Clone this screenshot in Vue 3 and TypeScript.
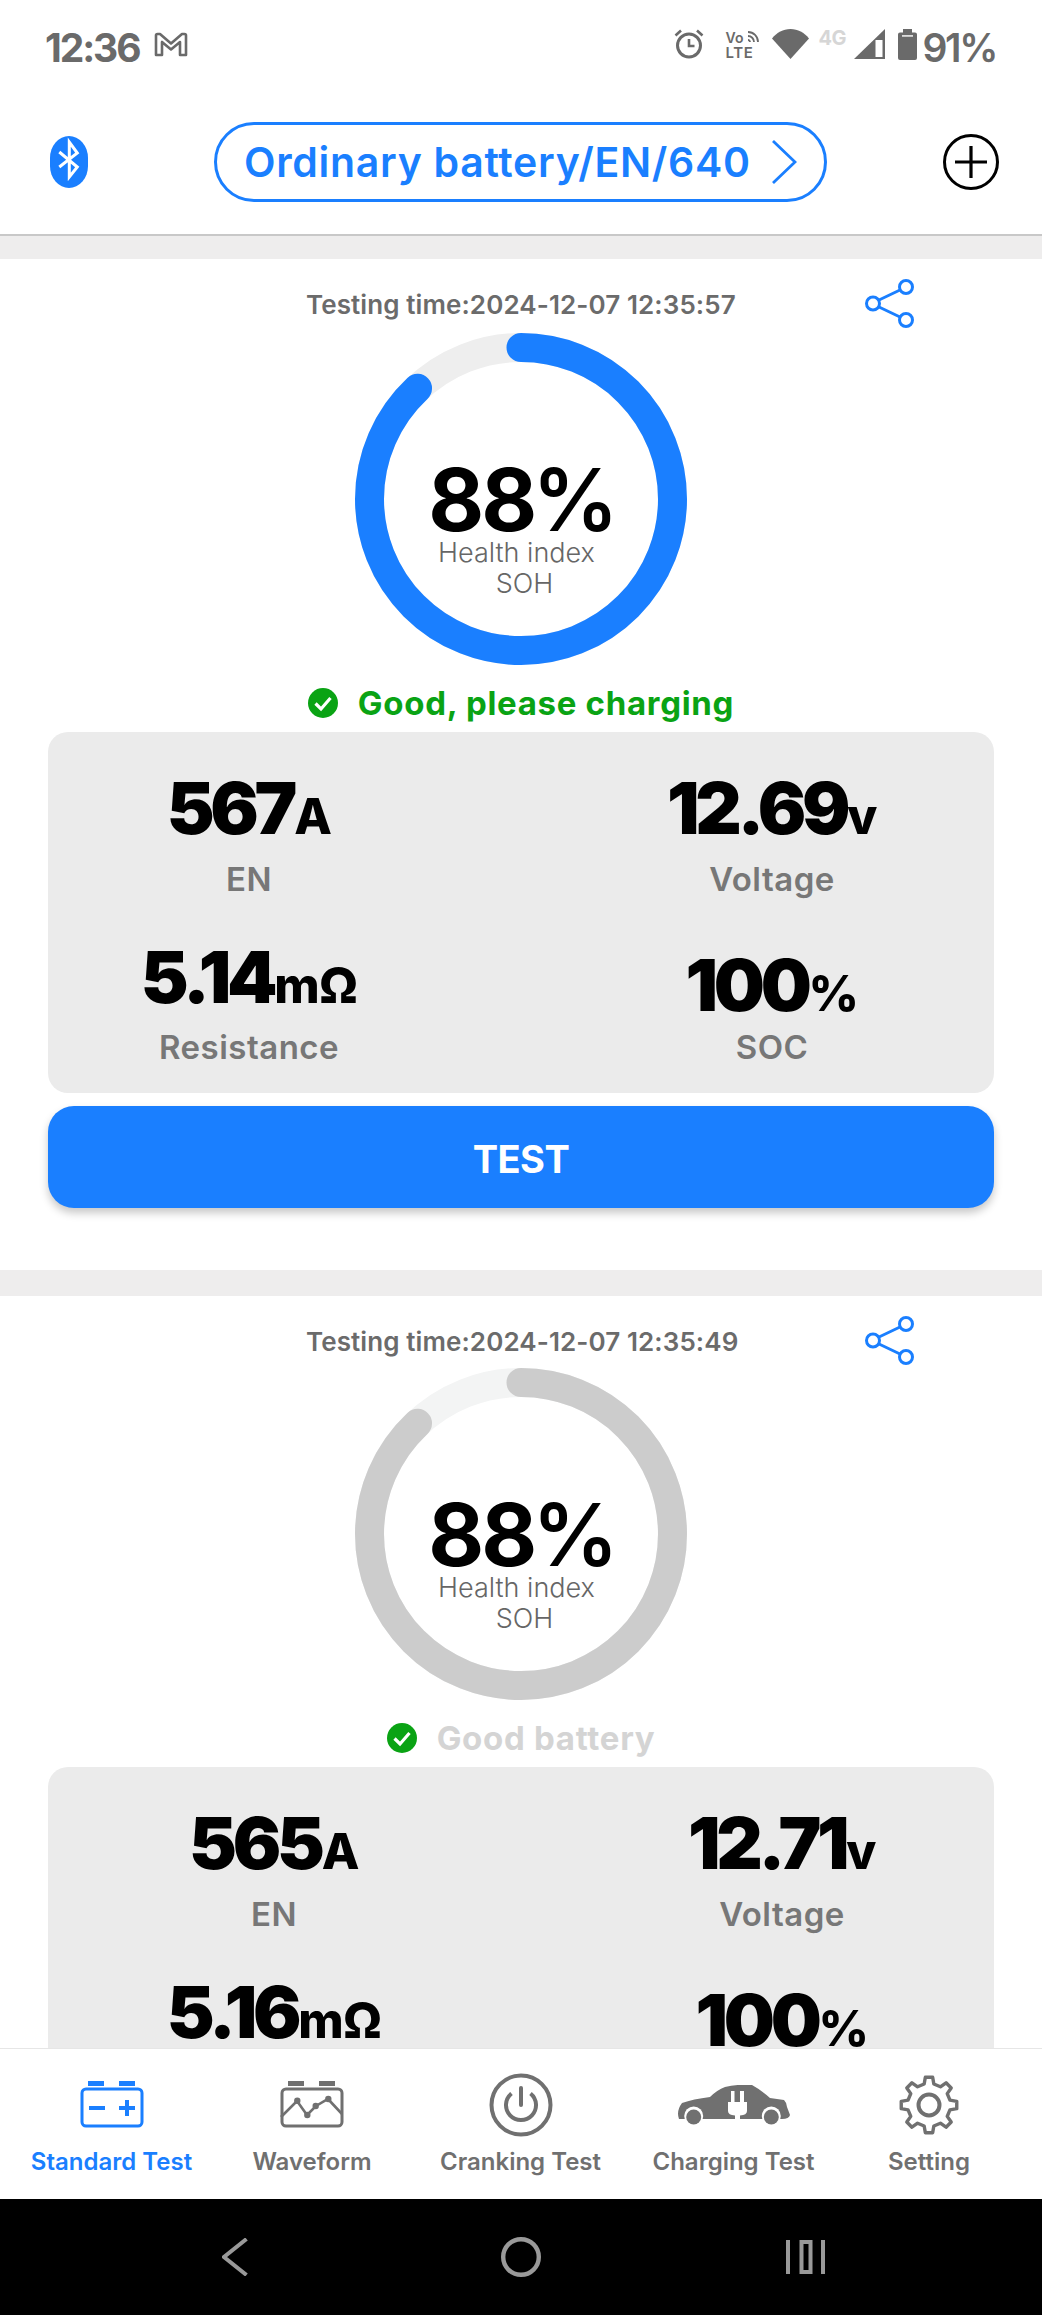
<script setup lang="ts">
interface Metric {
  num: string
  unit: string
  label: string
  cls?: string
}
interface Result {
  id: string
  time: string
  percent: number
  idle: boolean
  verdict: string
  metrics: Metric[]
}

const results: Result[] = [
  {
    id: 'latest',
    time: '2024-12-07 12:35:57',
    percent: 88,
    idle: false,
    verdict: 'Good, please charging',
    metrics: [
      { num: '567', unit: 'A', label: 'EN' },
      { num: '12.69', unit: 'v', label: 'Voltage' },
      { num: '5.14', unit: 'mΩ', label: 'Resistance', cls: 'low' },
      { num: '100', unit: '%', label: 'SOC', cls: 'low soc' },
    ],
  },
  {
    id: 'previous',
    time: '2024-12-07 12:35:49',
    percent: 88,
    idle: true,
    verdict: 'Good battery',
    metrics: [
      { num: '565', unit: 'A', label: 'EN' },
      { num: '12.71', unit: 'v', label: 'Voltage' },
      { num: '5.16', unit: 'mΩ', label: 'Resistance', cls: 'low' },
      { num: '100', unit: '%', label: 'SOC', cls: 'low soc' },
    ],
  },
]

const RING_RADIUS = 151.5
const ringLength = 2 * Math.PI * RING_RADIUS
const arcDash = (percent: number): string =>
  `${(ringLength * percent) / 100} ${ringLength}`

// Outline of the settings cog: eight teeth around the centre of a 60 box
const cogPath = (): string => {
  const pt = (r: number, deg: number): string => {
    const a = (deg * Math.PI) / 180
    return `${(30 + r * Math.sin(a)).toFixed(2)} ${(30 - r * Math.cos(a)).toFixed(2)}`
  }
  const parts: string[] = []
  for (let i = 0; i < 8; i++) {
    const c = i * 45
    parts.push(pt(21.5, c - 13), pt(28, c - 7.5), pt(28, c + 7.5), pt(21.5, c + 13))
  }
  return 'M' + parts.join('L') + 'Z'
}
const cog = cogPath()

const tabs = ['Standard Test', 'Waveform', 'Cranking Test', 'Charging Test', 'Setting']
</script>

<template>
  <div class="phone">
    <div class="status-bar">
      <div class="status-left">
        <span class="clock">12:36</span>
        <svg class="gmail" viewBox="0 0 34 25" width="34" height="25">
          <path d="M2 23V3.5Q2 2 3.5 2H6L17 11.5 28 2h2.500Q32 2 32 3.500V23H26V10L17 17.500 8 10V23Z" fill="none" stroke="#6a6a6a" stroke-width="2.600" stroke-linejoin="round" />
        </svg>
      </div>
      <div class="status-right">
        <svg width="30" height="30" viewBox="0 0 30 30">
          <circle cx="15" cy="16.500" r="11.500" fill="none" stroke="#6a6a6a" stroke-width="3" />
          <path d="M15 10v7h5.500M1.500 6.500 7 1.500M28.500 6.500 23 1.500" fill="none" stroke="#6a6a6a" stroke-width="2.600" />
        </svg>
        <div class="volte">
          <span class="vo">Vo</span>
          <svg width="12" height="14" viewBox="0 0 12 14">
            <path d="M1 5a6 6 0 0 1 6 6M1 1a10 10 0 0 1 10 10M1 9a2 2 0 0 1 2 2" fill="none" stroke="#6a6a6a" stroke-width="1.800" />
          </svg>
          <span class="lte">LTE</span>
        </div>
        <svg class="wifi" width="37" height="30" viewBox="0 0 37 30">
          <path d="M0 9.500C5 3.500 11 0 18.500 0S32 3.500 37 9.500L18.500 30Z" fill="#6a6a6a" />
        </svg>
        <span class="net">4G</span>
        <svg class="signal" width="31" height="30" viewBox="0 0 31 30">
          <path d="M0 30 31 0V30Z" fill="#6a6a6a" />
          <rect x="21.500" y="11" width="7" height="17" fill="#fff" />
        </svg>
        <svg class="cell" width="19" height="31" viewBox="0 0 19 31">
          <path d="M5 0h9v3.500h3q2 0 2 2V29q0 2-2 2H2q-2 0-2-2V5.500q0-2 2-2h3Z" fill="#6a6a6a" />
          <rect x="4" y="6" width="11" height="1.800" fill="#ddd" />
        </svg>
        <span class="level">91%</span>
      </div>
    </div>

    <header class="app-header">
      <svg class="bt" width="38" height="52" viewBox="0 0 38 52">
        <rect width="38" height="52" rx="19" ry="22" fill="#1a7fff" />
        <path d="M9.300 16 27.300 31 19.300 41V6L27.300 17 9.300 31" fill="none" stroke="#fff" stroke-width="3" />
      </svg>
      <button class="battery-pill">
        <span class="pill-text">Ordinary battery/EN/640</span>
        <svg width="26" height="44" viewBox="0 0 26 44">
          <path d="M2 1 24 22 2 43" fill="none" stroke="#1a7fff" stroke-width="2.800" />
        </svg>
      </button>
      <svg width="56" height="56" viewBox="0 0 56 56">
        <circle cx="28" cy="28" r="26.500" fill="none" stroke="#000" stroke-width="3" />
        <path d="M12 28h32M28 12v32" stroke="#000" stroke-width="3.200" />
      </svg>
    </header>

    <main class="history">
      <section v-for="r in results" :key="r.id" class="result" :class="{ idle: r.idle }">
        <div class="band"></div>
        <div class="time-row">
          <span class="time">Testing time:{{ r.time }}</span>
          <svg class="share" width="49" height="49" viewBox="0 0 49 49">
            <path d="M14 21 35 11M14 28 35 38" stroke="#1a7fff" stroke-width="3" />
            <circle cx="8" cy="24.500" r="6.500" fill="#fff" stroke="#1a7fff" stroke-width="3" />
            <circle cx="41" cy="8" r="6.500" fill="#fff" stroke="#1a7fff" stroke-width="3" />
            <circle cx="41" cy="41" r="6.500" fill="#fff" stroke="#1a7fff" stroke-width="3" />
          </svg>
        </div>

        <div class="ring">
          <svg width="332" height="332" viewBox="0 0 332 332">
            <circle class="ring-track" cx="166" cy="166" :r="RING_RADIUS" />
            <circle
              class="ring-arc"
              cx="166"
              cy="166"
              :r="RING_RADIUS"
              :stroke-dasharray="arcDash(r.percent)"
              transform="rotate(-90 166 166)"
            />
          </svg>
          <div class="ring-text">
            <div class="ring-value">{{ r.percent }}<span class="ring-pct">%</span></div>
            <div class="ring-name first">Health index</div>
            <div class="ring-name second">SOH</div>
          </div>
        </div>

        <div class="verdict">
          <svg width="30" height="30" viewBox="0 0 30 30">
            <circle cx="15" cy="15" r="15" fill="#0aa314" />
            <path d="M7.500 15.500 13 21 22.500 10" fill="none" stroke="#fff" stroke-width="3.200" />
          </svg>
          <span>{{ r.verdict }}</span>
        </div>

        <div class="metrics">
          <div v-for="m in r.metrics" :key="m.label" class="metric" :class="m.cls">
            <div class="metric-value">
              <span class="num">{{ m.num }}</span><span class="unit">{{ m.unit }}</span>
            </div>
            <div class="metric-label">{{ m.label }}</div>
          </div>
        </div>

        <button v-if="!r.idle" class="test-btn">TEST</button>
      </section>
    </main>

    <nav class="tabs">
      <div v-for="(t, i) in tabs" :key="t" class="tab" :class="{ active: i === 0 }">
        <div class="tab-icon">
          <svg v-if="i === 0" width="64" height="48" viewBox="0 0 64 48">
            <path d="M8 2.500h16M39 2.500h16" stroke="#1a7fff" stroke-width="5" />
            <rect x="2" y="8" width="60" height="37" rx="4" fill="none" stroke="#1a7fff" stroke-width="3" />
            <path d="M9 27h16M39 27h16M47 19v16" stroke="#1a7fff" stroke-width="4" />
          </svg>
          <svg v-else-if="i === 1" width="64" height="48" viewBox="0 0 64 48">
            <path d="M8 2.500h16M39 2.500h16" stroke="#707070" stroke-width="5" />
            <rect x="2" y="8" width="60" height="37" rx="4" fill="none" stroke="#707070" stroke-width="3" />
            <path d="M1 36 17 20 27 34 36 25 48 18 62 33" fill="none" stroke="#707070" stroke-width="2.600" />
            <g fill="#707070">
              <circle cx="17.300" cy="19.700" r="3.200" />
              <circle cx="27.300" cy="34" r="3.200" />
              <circle cx="35.700" cy="25" r="3.200" />
              <circle cx="48.300" cy="18" r="3.200" />
            </g>
          </svg>
          <svg v-else-if="i === 2" width="64" height="64" viewBox="0 0 64 64">
            <circle cx="32" cy="32" r="29.500" fill="none" stroke="#707070" stroke-width="4" />
            <path d="M22.500 20.500a15 15 0 1 0 19 0" fill="none" stroke="#707070" stroke-width="4" />
            <path d="M32 15v17" stroke="#707070" stroke-width="4" stroke-linecap="round" />
          </svg>
          <svg v-else-if="i === 3" width="114" height="40" viewBox="0 0 114 40">
            <path d="M2 34Q-1 26 5 18 16 14 33 12 40 5 48 2 60-1 75 0 84 5 93 13L107 15Q110 18 110 22L113 30Q112 34 105 34H2Z" fill="#707070" />
            <circle cx="16.700" cy="31" r="9.500" fill="#fff" />
            <circle cx="94.300" cy="31" r="9.500" fill="#fff" />
            <circle cx="16.700" cy="32" r="7.500" fill="#707070" />
            <circle cx="94.300" cy="32" r="7.500" fill="#707070" />
            <path d="M54 6h3.500v11H63V6h4v11h3V26Q70 30 63 30.500V35H58V30.500Q51 30 51 26V17h3Z" fill="#fff" />
          </svg>
          <svg v-else width="60" height="60" viewBox="0 0 60 60">
            <path :d="cog" fill="none" stroke="#707070" stroke-width="3.400" stroke-linejoin="round" />
            <circle cx="30" cy="30" r="10.500" fill="none" stroke="#707070" stroke-width="4" />
          </svg>
        </div>
        <span class="tab-label">{{ t }}</span>
      </div>
    </nav>

    <div class="system-nav">
      <svg width="26" height="38" viewBox="0 0 26 38">
        <path d="M24.500 1 2 19 24.500 37" fill="none" stroke="#999" stroke-width="4" />
      </svg>
      <svg width="40" height="40" viewBox="0 0 40 40">
        <circle cx="20" cy="20" r="17.800" fill="none" stroke="#999" stroke-width="4.400" />
      </svg>
      <svg width="39" height="34" viewBox="0 0 39 34">
        <path d="M2 0v34M37 0v34" stroke="#999" stroke-width="4" />
        <rect x="15.500" y="2" width="9" height="30" fill="none" stroke="#999" stroke-width="4" />
      </svg>
    </div>
  </div>
</template>

<style scoped>
.phone {
  width: 1042px;
  height: 2315px;
  display: flex;
  flex-direction: column;
  background: #fff;
  font-family: Inter, "Noto Sans", sans-serif;
  overflow: hidden;
}

/* System status strip */
.status-bar {
  height: 90px;
  flex: none;
  display: flex;
  justify-content: space-between;
  align-items: flex-start;
  box-sizing: border-box;
  padding: 29px 46px 0 45px;
  color: #6a6a6a;
}
.status-left {
  display: flex;
  align-items: flex-start;
  gap: 15px;
}
.clock {
  font-size: 39px;
  line-height: 38px;
  font-weight: 700;
  letter-spacing: -2.100px;
}
.gmail {
  margin-top: 3px;
}
.status-right {
  display: flex;
  align-items: flex-start;
}
.volte {
  width: 33px;
  margin-left: 22px;
  margin-top: 1px;
  display: flex;
  flex-wrap: wrap;
  align-items: center;
  color: #6a6a6a;
}
.vo {
  font-size: 14px;
  line-height: 15px;
  font-weight: 600;
  width: 21px;
}
.lte {
  font-size: 15px;
  line-height: 15px;
  font-weight: 600;
  width: 33px;
  letter-spacing: 0.600px;
}
.wifi {
  margin-left: 13px;
}
.net {
  margin-left: 10px;
  width: 28px;
  font-size: 20px;
  line-height: 19px;
  font-weight: 700;
  color: #d6d6d6;
  letter-spacing: -0.500px;
}
.signal {
  margin-left: 7px;
}
.cell {
  margin-left: 13px;
}
.level {
  margin-left: 6px;
  font-size: 39px;
  line-height: 38px;
  font-weight: 600;
  letter-spacing: -2.400px;
}

/* App header */
.app-header {
  height: 146px;
  flex: none;
  display: flex;
  justify-content: space-between;
  align-items: center;
  box-sizing: border-box;
  padding: 0 43px 0 50px;
  border-bottom: 2px solid #c8c8c8;
}
.battery-pill {
  width: 613px;
  height: 80px;
  margin-left: 10px;
  display: flex;
  align-items: center;
  justify-content: space-between;
  box-sizing: border-box;
  padding: 0 27px 0 27px;
  background: #fff;
  border: 3px solid #1a7fff;
  border-radius: 40px;
  color: #1a7fff;
  font: 600 41px/1 Inter, "Noto Sans", sans-serif;
  letter-spacing: 0.700px;
}
.pill-text {
  padding-top: 1px;
}

/* Test results list */
.history {
  flex: 1;
  min-height: 0;
  overflow: hidden;
}
.band {
  height: 23px;
  background: #eeeded;
}
.idle .band {
  height: 26px;
}
.result {
  padding-bottom: 62px;
  display: flex;
  flex-direction: column;
}
.time-row {
  display: flex;
  align-items: center;
  justify-content: flex-start;
  margin-top: 20px;
  padding-left: 306px;
  height: 49px;
}
.idle .ring {
  margin-top: 3px;
}
.time {
  width: 429px;
  flex: none;
  padding-top: 2px;
  white-space: nowrap;
  font-size: 26px;
  font-weight: 600;
  color: #6b6b6b;
  letter-spacing: 0.100px;
}
.share {
  margin-left: 130px;
}
.ring {
  position: relative;
  width: 332px;
  height: 332px;
  margin: 5px auto 0;
}
.ring-track,
.ring-arc {
  fill: none;
  stroke-width: 29;
}
.ring-track {
  stroke: #eeeeee;
}
.ring-arc {
  stroke: #1a7fff;
  stroke-linecap: round;
}
.idle .ring-track {
  stroke: #f3f4f4;
}
.idle .ring-arc {
  stroke: #cccccc;
}
.ring-text {
  position: absolute;
  inset: 0;
  padding-top: 135px;
  box-sizing: border-box;
  text-align: center;
}
.ring-value {
  height: 64px;
  padding-left: 5px;
  font-size: 86px;
  line-height: 64px;
  font-weight: 700;
  color: #000;
  letter-spacing: -3px;
}
.ring-pct {
  font-weight: 600;
  letter-spacing: 0;
  margin-left: -2px;
}
.ring-name {
  font-size: 27px;
  line-height: 31px;
  font-weight: 300;
  color: #666;
}
.ring-name.first {
  margin-top: 5px;
  padding-right: 9px;
}
.ring-name.second {
  padding-left: 7px;
}
.verdict {
  height: 40px;
  margin-top: 18px;
  display: flex;
  align-items: center;
  justify-content: center;
  gap: 20px;
  font-size: 33px;
  font-weight: 700;
  letter-spacing: 0.700px;
  color: #0aa314;
}
.idle .verdict {
  color: #d4d4d4;
}
.metrics {
  margin: 9px 48px 0;
  height: 361px;
  box-sizing: border-box;
  padding-top: 46px;
  display: grid;
  grid-template-columns: 402px 444px;
  column-gap: 100px;
  row-gap: 48px;
  align-content: start;
  background: #ebebeb;
  border-radius: 20px;
}
.idle .metrics {
  grid-template-columns: 452px 424px;
  column-gap: 70px;
}
.metric {
  display: flex;
  flex-direction: column;
  align-items: center;
}
.metric-value {
  height: 60px;
  display: flex;
  align-items: baseline;
  line-height: 60px;
  color: #000;
}
.num {
  font-size: 72px;
  font-weight: 900;
  letter-spacing: -4.300px;
}
.unit {
  margin-left: 1px;
  font-size: 49px;
  font-weight: 800;
  letter-spacing: -0.500px;
}
.metric-label {
  height: 40px;
  line-height: 40px;
  margin-top: 21px;
  font-size: 33px;
  font-weight: 600;
  letter-spacing: 0.500px;
  color: #777;
}
.low .metric-label {
  margin-top: 20px;
}
.soc {
  padding-top: 8px;
}
.soc .metric-label {
  margin-top: 12px;
}
.test-btn {
  height: 102px;
  margin: 13px 48px 0;
  padding-top: 4px;
  border: 0;
  border-radius: 26px;
  background: #1a7fff;
  box-shadow: 0 5px 9px rgba(0, 0, 0, 0.22);
  color: #fff;
  font: 700 38px/1 Inter, "Noto Sans", sans-serif;
  letter-spacing: -0.500px;
}

/* Bottom tab bar */
.tabs {
  height: 151px;
  flex: none;
  display: grid;
  grid-template-columns: 223px 178px 239px 187px 204px;
  box-sizing: border-box;
  padding-top: 24px;
  background: #fff;
  border-top: 1px solid #e6e6e6;
}
.tab {
  display: flex;
  flex-direction: column;
  align-items: center;
  color: #707070;
}
.tab.active {
  color: #1a7fff;
}
.tab-icon {
  height: 63px;
  display: flex;
  align-items: center;
  justify-content: center;
}
.tab-label {
  margin-top: 8px;
  line-height: 36px;
  font-size: 24px;
  font-weight: 600;
  white-space: nowrap;
  letter-spacing: 0;
}

/* Android navigation bar */
.system-nav {
  height: 116px;
  flex: none;
  display: grid;
  grid-template-columns: 469px 104px 465px;
  justify-items: center;
  align-items: center;
  background: #000;
}
</style>
